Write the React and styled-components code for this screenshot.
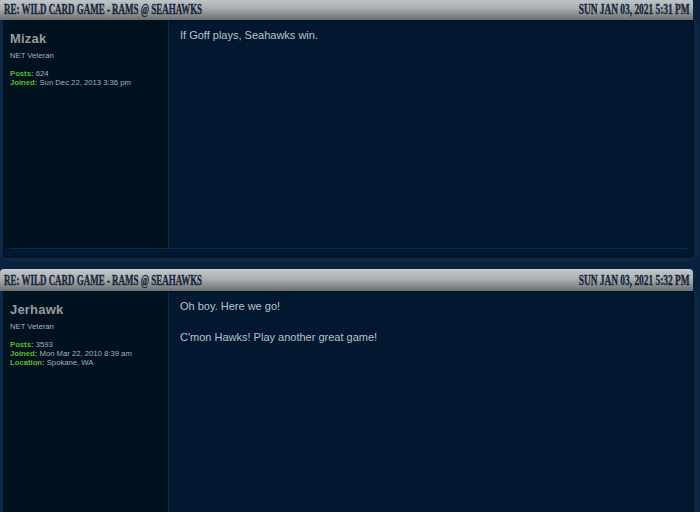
import React from "react";
import styled, { createGlobalStyle } from "styled-components";

const Global = createGlobalStyle`
  html, body { margin: 0; padding: 0; background: #0a2140; overflow: hidden; }
  body { font-family: "Liberation Sans", Arial, sans-serif; }
`;

const Page = styled.div`
  display: flex;
  flex-direction: column;
  gap: 8px;
  margin-top: -2px;
`;

const Post = styled.div`
  display: flex;
  flex-direction: column;
`;

const Header = styled.div`
  height: 22px;
  margin-right: 7px;
  border-radius: 4px 4px 0 0;
  background: linear-gradient(to bottom, #c6c9cb 0%, #abafb2 45%, #6c7073 100%);
  display: flex;
  align-items: center;
  justify-content: space-between;
  padding: 2px 3px 0 4px;
  box-sizing: border-box;
`;

const HeadText = styled.span`
  display: inline-block;
  font-family: "Liberation Serif", "Times New Roman", serif;
  font-weight: bold;
  font-size: 14px;
  color: #16263b;
  -webkit-text-stroke: 0.35px #16263b;
  text-transform: uppercase;
  white-space: nowrap;
  transform: scaleX(${(p) => (p.$right ? 0.67 : 0.64)});
  transform-origin: ${(p) => (p.$right ? "right" : "left")} center;
`;

const Body = styled.div`
  margin-right: 3px;
  border: 3px solid #0c2849;
  border-top: none;
  border-radius: 0 0 7px 7px;
  background: #011830;
  box-shadow: inset 0 0 3px rgba(0, 0, 0, 0.8);
  display: flex;
  flex-direction: column;
`;

const Row = styled.div`
  display: grid;
  grid-template-columns: 166px 1fr;
  height: ${(p) => p.$h}px;
`;

const Profile = styled.div`
  background: #00111f;
  border-right: 1px solid #0f2540;
  padding: 11px 7px 10px;
`;

const Name = styled.div`
  font-weight: bold;
  font-size: 13px;
  color: #979ca1;
  line-height: 16px;
  margin-bottom: 4px;
  letter-spacing: 0.2px;
`;

const Rank = styled.div`
  font-size: 7.7px;
  color: #aab0b6;
  line-height: 9px;
  margin-bottom: 9px;
`;

const Detail = styled.div`
  font-size: 7.7px;
  color: #aab0b6;
  line-height: 9px;
`;

const Label = styled.b`
  color: #5fb82c;
`;

const Content = styled.div`
  padding: 8px 11px;
  font-size: 11px;
  line-height: 15.5px;
  color: #b9c2cc;
`;

const Foot = styled.div`
  height: 9px;
  margin: 0 7px;
  border-top: 1px solid #10294a;
`;

const posts = [
  {
    date: "Sun Jan 03, 2021 5:31 pm",
    name: "Mizak",
    posts: "624",
    joined: "Sun Dec 22, 2013 3:36 pm",
    h: 228,
    text: ["If Goff plays, Seahawks win."],
  },
  {
    date: "Sun Jan 03, 2021 5:32 pm",
    name: "Jerhawk",
    posts: "3593",
    joined: "Mon Mar 22, 2010 8:39 am",
    location: "Spokane, WA",
    h: 260,
    text: ["Oh boy. Here we go!", "C'mon Hawks! Play another great game!"],
  },
];

export default function App() {
  return (
    <>
      <Global />
      <Page>
        {posts.map((p, i) => (
          <Post key={i}>
            <Header>
              <HeadText>Re: Wild Card Game - Rams @ Seahawks</HeadText>
              <HeadText $right>{p.date}</HeadText>
            </Header>
            <Body>
              <Row $h={p.h}>
                <Profile>
                  <Name>{p.name}</Name>
                  <Rank>NET Veteran</Rank>
                  <Detail><Label>Posts:</Label> {p.posts}</Detail>
                  <Detail><Label>Joined:</Label> {p.joined}</Detail>
                  {p.location && (
                    <Detail><Label>Location:</Label> {p.location}</Detail>
                  )}
                </Profile>
                <Content>
                  {p.text.map((t, j) => (
                    <React.Fragment key={j}>
                      {j > 0 && (<><br /><br /></>)}
                      {t}
                    </React.Fragment>
                  ))}
                </Content>
              </Row>
              <Foot />
            </Body>
          </Post>
        ))}
      </Page>
    </>
  );
}
